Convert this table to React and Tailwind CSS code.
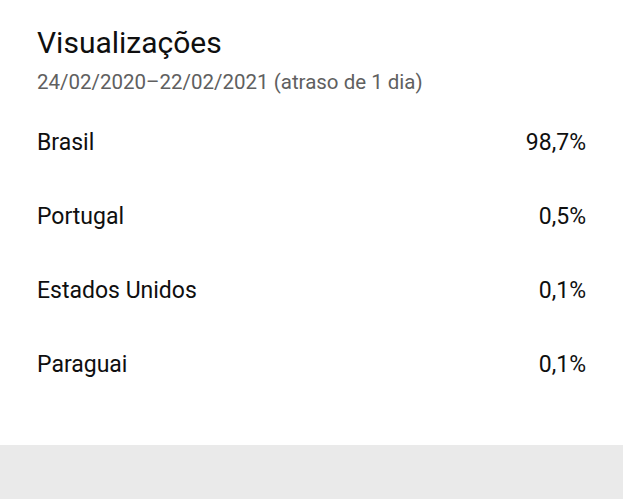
const rows = [
  { country: 'Brasil', value: '98,7%' },
  { country: 'Portugal', value: '0,5%' },
  { country: 'Estados Unidos', value: '0,1%' },
  { country: 'Paraguai', value: '0,1%' },
]

export default function App() {
  return (
    <div className="w-[623px] h-[499px] bg-white flex flex-col font-['Roboto',sans-serif] text-[#0f0f0f]">
      <div className="h-[445px] px-[37px] pt-[24px]">
        {/* Header */}
        <h1 className="text-[30px] leading-[38px]">Visualizações</h1>
        <p className="mt-[6px] text-[20.5px] leading-[28px] text-[#606060]">
          24/02/2020–22/02/2021 (atraso de 1 dia)
        </p>

        {/* Rows */}
        <div className="mt-[10px] flex flex-col">
          {rows.map((r) => (
            <div key={r.country} className="h-[74px] flex items-center justify-between text-[23px]">
              <span>{r.country}</span>
              <span>{r.value}</span>
            </div>
          ))}
        </div>
      </div>
      <div className="flex-1 bg-[#eaeaea]" />
    </div>
  )
}
